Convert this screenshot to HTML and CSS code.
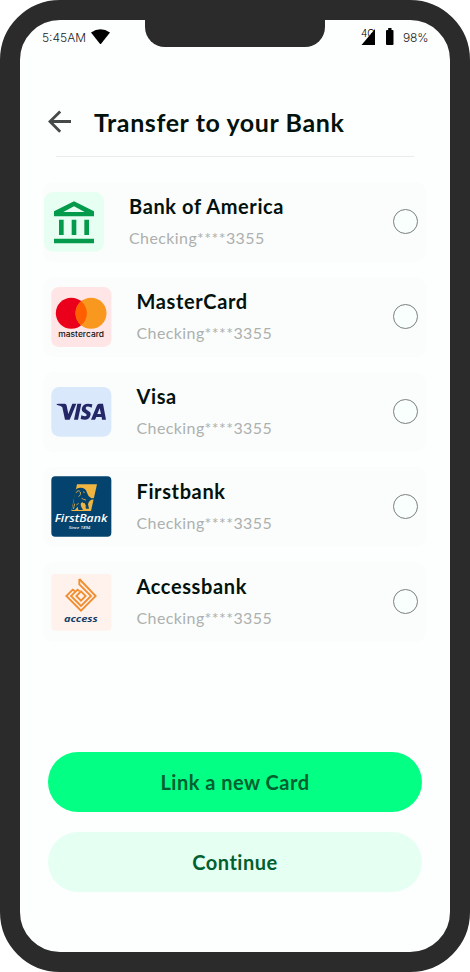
FILE: index.html
```html
<!DOCTYPE html>
<html lang="en">
<head>
<meta charset="utf-8">
<title>Transfer to your Bank</title>
<link rel="stylesheet" href="styles.css">
</head>
<body>
<div class="phone">
  <div class="notch"></div>
  <header class="status">
    <span class="time">5:45AM</span>
    <svg class="wifi" width="20" height="16" viewBox="0 0 20 16"><path d="M0 3.6Q9.500-3 19 3.600L10.300 14.600Q9.500 15.600 8.700 14.600Z"/></svg>
    <svg class="signal" width="16" height="18" viewBox="0 0 16 18"><text x="0" y="9" class="net">4G</text><path d="M.5 17L14 1V17Z"/></svg>
    <svg class="battery" width="8" height="18" viewBox="0 0 8 18"><path d="M2.200 0h3.300v2h1a1 1 0 0 1 1 1v13a1 1 0 0 1-1 1h-5.500a1 1 0 0 1-1-1v-13a1 1 0 0 1 1-1h1.200z"/></svg>
    <span class="percent">98%</span>
  </header>
  <div class="heading">
    <svg class="back" width="24" height="24" viewBox="0 0 24 24"><path d="M12.200 1.500L2 11.500L12.200 21.700M2 11.500H23"/></svg>
    <h1>Transfer to your Bank</h1>
  </div>
  <main class="accounts">
    <div class="row first">
      <svg class="logo" width="60" height="60" viewBox="24 46 180 180"><rect x="24" y="46" width="180" height="179" rx="27" fill="#e6fff2"/><path fill="#049a4c" fill-rule="evenodd" d="M114 74L174 104V119H54V104ZM114 89L82 106H146ZM69 129h14v46h-14zM107 129h14v46h-14zM145 129h14v46h-14zM54 186h120v14H54z"/></svg>
      <div class="info"><div class="name">Bank of America</div><div class="number">Checking****3355</div></div><span class="radio"></span>
    </div>
    <div class="row">
      <svg class="logo" width="61" height="60" viewBox="46 43 183 180"><rect x="47" y="43" width="180" height="180" rx="22" fill="#ffe5e5"/><circle cx="107" cy="122" r="46.500" fill="#eb001b"/><circle cx="166" cy="122" r="46.500" fill="#f9981f"/><path fill="#ff5f00" d="M136.500 86A46.500 46.500 0 0 1 136.500 158A46.500 46.500 0 0 1 136.500 86Z"/><text class="mc" x="68" y="192" textLength="137" lengthAdjust="spacingAndGlyphs">mastercard</text></svg>
      <div class="info"><div class="name">MasterCard</div><div class="number">Checking****3355</div></div><span class="radio"></span>
    </div>
    <div class="row">
      <svg class="logo" width="61" height="50" viewBox="46 62 183 150"><rect x="47" y="62" width="180" height="149" rx="24" fill="#dae8fb"/><g fill="#242665"><path d="M63 113Q66 112 70 112H87Q92 112 93 118L98 143L110 112H122L102 160H88L80 123Q78 119 63 115ZM125 112H137L127 160H115Z"/><path d="M170 114L168 124Q152 117 150 125Q149 129 157 133Q168 138 164 148Q159 165 135 158L137 147Q151 153 153 147Q154 143 146 139Q136 134 139 124Q145 107 170 114Z"/><path fill-rule="evenodd" d="M190 112H202L211 160H199L198 152H182L178 160H166L184 117Q186 112 190 112ZM192 126L185 143H196Z"/></g></svg>
      <div class="info"><div class="name">Visa</div><div class="number">Checking****3355</div></div><span class="radio"></span>
    </div>
    <div class="row">
      <svg class="logo firstbank" width="61" height="61" viewBox="46 41 183 183"><rect x="47" y="42" width="180" height="181" rx="12" fill="#03436d"/><path fill="#f0b440" d="M124 66H184L166 146H107Z"/><path fill="#03436d" d="M116 93Q118 77 133 76Q150 75 154 91Q157 103 167 108L184 107L181 111L166 112Q158 118 157 126L160 139H151L148 125L140 120Q133 122 136 132L142 143H128L126 133L118 143H108L113 122Q116 108 116 93Z"/><path fill="none" stroke="#f0b440" stroke-width="2.500" d="M121 92Q127 80 134 89Q137 98 129 103M142 88L147 91M138 108Q144 112 151 113M117 124Q115 134 113 140M129 123L122 128M145 122L150 132"/><text class="fb" x="57" y="180" textLength="158" lengthAdjust="spacingAndGlyphs">FirstBank</text><text class="since" x="99" y="200" textLength="65" lengthAdjust="spacingAndGlyphs">Since 1894</text></svg>
      <div class="info"><div class="name">Firstbank</div><div class="number">Checking****3355</div></div><span class="radio"></span>
    </div>
    <div class="row">
      <svg class="logo" width="61" height="57" viewBox="46 51 183 171"><rect x="47" y="51" width="180" height="170" rx="12" fill="#fff1ec"/><g fill="none" stroke="#f18d2f" stroke-width="5.500"><path d="M131 66L180 117L136 161L92 117L111 98L118 103"/><path d="M131 66V82L166 117L136 147L106 117L126 98L132 103"/><path d="M136 103L150 117L136 131L122 117Z"/></g><text class="access" x="85" y="194" textLength="101" lengthAdjust="spacingAndGlyphs">access</text></svg>
      <div class="info"><div class="name">Accessbank</div><div class="number">Checking****3355</div></div><span class="radio"></span>
    </div>
  </main>
  <div class="actions">
    <button class="btn primary">Link a new Card</button>
    <button class="btn secondary">Continue</button>
  </div>
</div>
</body>
</html>
```
FILE: styles.css
```css
* { box-sizing: border-box; }
body { margin: 0; background: #fff; font-family: Lato, sans-serif; }
.phone { position: relative; width: 470px; height: 972px; border: 20px solid #2b2b2b; border-radius: 60px; background: #fdfffe; overflow: hidden; }
.notch { position: absolute; top: -1px; left: 125px; width: 180px; height: 28px; border-radius: 0 0 20px 20px; background: #2b2b2b; }
.status { display: flex; align-items: center; height: 34px; padding: 0 22px; font: 300 12px/16px Inter, sans-serif; color: #222; }
.time { width: 49px; padding-top: 2px; white-space: nowrap; }
.wifi { margin-top: -1px; }
.signal { margin-left: auto; margin-right: 9px; }
.net { font: 300 10px Inter, sans-serif; }
.battery { margin-right: 9px; }
.percent { width: 25px; padding-top: 2px; letter-spacing: -.2px; white-space: nowrap; }
.heading { display: flex; align-items: center; height: 68px; margin: 35px 36px 0 28px; padding-bottom: 2px; background: linear-gradient(#e9eceb, #e9eceb) 8px 100% / 358px 1px no-repeat; }
.back { fill: none; stroke: #454948; stroke-width: 2.8; flex: none; }
h1 { margin: 0 0 0 22px; font-size: 25px; line-height: 30px; font-weight: 700; letter-spacing: .6px; color: #03120c; white-space: nowrap; }
.accounts { display: flex; flex-direction: column; gap: 15px; margin: 25px 24px 0 23px; }
.row { display: flex; align-items: center; height: 80px; padding: 0 8px; border-radius: 10px; background: #fbfdfc; }
.row.first { padding-left: 1px; }
.logo { flex: none; }
.firstbank { margin-top: -2px; }
.info { flex: 1; margin: -1px 0 0 24.5px; }
.row.first .info { margin-left: 25px; }
.name { height: 31px; font-size: 20px; line-height: 30px; font-weight: 700; letter-spacing: .62px; color: #03120c; }
.number { padding-top: 1px; font-size: 16px; line-height: 30px; letter-spacing: .4px; color: #adb0ae; }
.radio { width: 25px; height: 25px; margin-top: -1px; border: 1px solid #7c807e; border-radius: 50%; background: #f8fffc; }
.mc { font: 500 22px Inter, sans-serif; fill: #111; }
.fb { font: italic 600 31px "Open Sans", sans-serif; fill: #fff; }
.since { font: italic 600 12px "Open Sans", sans-serif; fill: #e8f0f5; }
.access { font: italic 700 27px "Open Sans", sans-serif; fill: #173f69; }
.actions { display: flex; flex-direction: column; gap: 20px; margin: 110px 28px 0; }
.btn { height: 60px; padding: 0; border: 0; border-radius: 30px; font: 700 20px/30px Lato, sans-serif; letter-spacing: .5px; color: #00602f; }
.primary { background: #03ff83; }
.secondary { background: #e6fff3; }
```
